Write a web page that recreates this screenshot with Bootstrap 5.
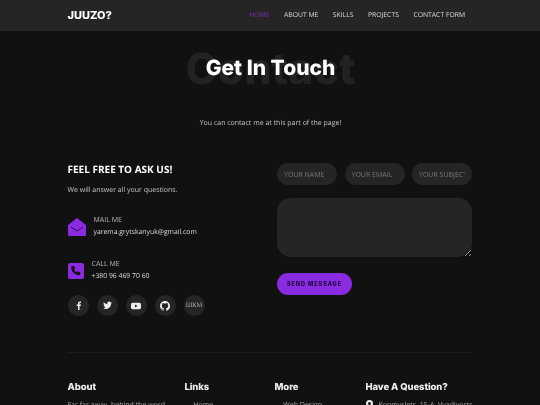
<!DOCTYPE html>
<html lang="en">
<head>
<meta charset="utf-8">
<title>Contact</title>
<link href="https://cdn.jsdelivr.net/npm/bootstrap@5.3.0/dist/css/bootstrap.min.css" rel="stylesheet">
<style>
html,body{background:#111;height:405px;overflow:hidden}
body{font-family:"Open Sans",sans-serif;font-size:7px;color:#c4c4c4;width:540px;text-rendering:geometricPrecision}
.topbar,.wrap-page{filter:blur(.3px)}
.wrap-main{width:405px;margin-left:67px}
.topbar{background:#252525;height:31px}
.topbar-in{padding-right:7px}
.brand-name{font-family:Inter,sans-serif;font-weight:800;font-size:11px;color:#fff;margin-left:.5px}
.menu-list{gap:14.500px;font-size:6.8px;color:#dcdcdc;list-style:none;margin:0;padding:0}
.menu-list a{color:inherit;text-decoration:none}
.menu-list a.on{color:#7a2eb8}
.hero-block{height:60px;margin-top:9px;width:407px}
.ghost-title{position:absolute;left:0;right:0;top:6px;text-align:center;font-family:Inter,sans-serif;font-weight:800;font-size:43px;line-height:46px;color:#222;margin:0}
.hero-title{position:relative;font-family:Inter,sans-serif;font-weight:800;font-size:21px;line-height:28px;color:#fff;margin:0;padding-top:15px;text-align:center}
.hero-sub{line-height:12px;text-align:center;margin:18px 0 0;width:407px}
.contact-row{margin-top:32px;height:190px}
.left-side{width:210px;padding-left:.5px}
.right-side{width:195px;padding-top:1px}
.ask-title{font-weight:700;font-size:10px;line-height:15px;color:#fff;margin:0}
.ask-sub{line-height:12px;margin:8px 0 0}
.info-line{line-height:12px}
.info-line .lab{color:#b8b8b8}
.info-line .val{color:#dcdcdc;font-size:6.85px}
.mail-line{margin-top:18px;gap:8px}
.call-line{margin-top:20px;gap:8px}
.social-row{gap:8px;margin-top:12px}
.social-dot{width:21px;height:21px;border-radius:50%;background:#252525;color:#eee;flex:none}
.social-text{font-family:"Liberation Serif",serif;font-size:6.5px;color:#aaa}
.pill-field{width:60px;height:22px;border:0;border-radius:11px;background:#252525;padding:0 7px;font:7px "Open Sans",sans-serif;color:#777}
.pill-field::placeholder{color:#777;opacity:1}
.area-field{display:block;width:195px;height:59px;border:0;border-radius:14px;background:#252525;margin-top:13px}
.send-pill{width:75px;height:22px;border:0;border-radius:11px;background:#8a2be2;color:#1d0638;font:800 5.600px Inter,sans-serif;letter-spacing:.9px;margin-top:16px;padding:0}
.foot-rule{border-top:1px solid #1c1c1c}
.foot-grid{display:grid;grid-template-columns:117px 90px 91px 1fr;margin-top:28px;padding-left:.5px}
.foot-head{font-family:Inter,sans-serif;font-weight:800;font-size:9.5px;letter-spacing:-.1px;line-height:14px;color:#eee;margin:0 0 5px}
.foot-item{line-height:12px;color:#a8a8a8;white-space:nowrap}
.pin-gap{gap:6px}
</style>
</head>
<body>
<nav class="topbar">
  <div class="wrap-main topbar-in h-100 d-flex align-items-center justify-content-between">
    <span class="brand-name">JUUZO?</span>
    <ul class="menu-list d-flex">
      <li><a class="on" href="#">HOME</a></li>
      <li><a href="#">ABOUT ME</a></li>
      <li><a href="#">SKILLS</a></li>
      <li><a href="#">PROJECTS</a></li>
      <li><a href="#">CONTACT FORM</a></li>
    </ul>
  </div>
</nav>
<div class="wrap-page">
<main class="wrap-main">
  <div class="hero-block position-relative">
    <p class="ghost-title">Contact</p>
    <h1 class="hero-title">Get In Touch</h1>
  </div>
  <p class="hero-sub">You can contact me at this part of the page!</p>
  <div class="contact-row d-flex">
    <div class="left-side">
      <h2 class="ask-title">FEEL FREE TO ASK US!</h2>
      <p class="ask-sub">We will answer all your questions.</p>
      <div class="d-flex align-items-center info-line mail-line">
        <svg width="18" height="18" viewBox="0 0 18 18"><path fill="#8a2be2" d="M0 7 9 0l9 7v9.500a1.500 1.500 0 0 1-1.500 1.500H1.500A1.500 1.500 0 0 1 0 16.500Z"/><path fill="none" stroke="#2a0d4a" stroke-width="1" d="M3 9l6 4 6-4"/></svg>
        <div><div class="lab">MAIL ME</div><div class="val">yarema.grytskanyuk@gmail.com</div></div>
      </div>
      <div class="d-flex align-items-center info-line call-line">
        <svg width="16" height="16" viewBox="0 0 16 16"><rect width="16" height="16" rx="2" fill="#8a2be2"/><path fill="#111" d="M4 3.200 6 2.800l1.200 2.700-1.200 1c.6 1.300 1.500 2.200 2.800 2.900l1-1.200 2.700 1.200-.4 2c-.1.500-.5.800-1 .8C6.700 12.200 3.200 8.500 3.200 4.200c0-.5.300-.9.800-1Z"/></svg>
        <div><div class="lab">CALL ME</div><div class="val">+380 96 469 70 60</div></div>
      </div>
      <div class="d-flex social-row">
        <span class="social-dot d-flex align-items-center justify-content-center"><svg width="9" height="9" viewBox="0 0 9 9"><path fill="#eee" d="M5.500 9V5.100h1.300l.2-1.500H5.500V2.700c0-.4.100-.7.700-.7H7V.6C6.800.6 6.400.5 5.900.5 4.800.5 4 1.200 4 2.500v1.100H2.700v1.500H4V9Z"/></svg></span>
        <span class="social-dot d-flex align-items-center justify-content-center"><svg width="9" height="9" viewBox="0 0 9 9"><path fill="#eee" d="M9 1.800c-.3.100-.7.200-1 .3.400-.2.600-.6.800-1-.4.200-.7.400-1.100.4A1.800 1.800 0 0 0 4.500 3.200C3 3.100 1.700 2.400.8 1.300c-.5.800-.2 1.800.5 2.400-.3 0-.6-.1-.8-.2 0 .9.600 1.600 1.400 1.800-.2.100-.5.100-.8 0 .2.700.9 1.200 1.700 1.300C2 7.100 1 7.400 0 7.300 3.500 9.400 8.100 7.200 8.100 2.600c.4-.2.700-.5.900-.8Z"/></svg></span>
        <span class="social-dot d-flex align-items-center justify-content-center"><svg width="10" height="8" viewBox="0 0 10 8"><rect y=".8" width="10" height="6.400" rx="1.600" fill="#eee"/><path fill="#252525" d="M4 2.500 6.600 4 4 5.500Z"/></svg></span>
        <span class="social-dot d-flex align-items-center justify-content-center"><svg width="10" height="10" viewBox="0 0 16 16"><path fill="#eee" d="M8 0C3.580 0 0 3.580 0 8c0 3.540 2.290 6.530 5.470 7.590.4.070.55-.17.550-.38 0-.19-.01-.82-.01-1.490-2.010.37-2.530-.49-2.690-.94-.09-.23-.48-.94-.82-1.130-.28-.15-.68-.52-.01-.53.630-.01 1.080.58 1.230.82.720 1.210 1.870.87 2.330.66.070-.52.280-.87.510-1.070-1.780-.2-3.640-.89-3.640-3.950 0-.87.310-1.590.82-2.150-.08-.2-.36-1.020.08-2.120 0 0 .67-.21 2.200.82.640-.18 1.320-.27 2-.27s1.360.09 2 .27c1.530-1.040 2.200-.82 2.200-.82.440 1.100.16 1.920.08 2.120.51.560.82 1.270.82 2.150 0 3.070-1.870 3.750-3.650 3.950.29.250.54.730.54 1.480 0 1.070-.01 1.930-.01 2.200 0 .21.150.46.550.38A8.010 8.010 0 0 0 16 8c0-4.420-3.580-8-8-8Z"/></svg></span>
        <span class="social-dot social-text d-flex align-items-center justify-content-center">ШКМ</span>
      </div>
    </div>
    <form class="right-side">
      <div class="d-flex justify-content-between">
        <input class="pill-field" placeholder="YOUR NAME">
        <input class="pill-field" placeholder="YOUR EMAIL">
        <input class="pill-field" placeholder="YOUR SUBJECT">
      </div>
      <textarea class="area-field" aria-label="Message"></textarea>
      <button class="send-pill" type="button">SEND MESSAGE</button>
    </form>
  </div>
  <div class="foot-rule"></div>
  <div class="foot-grid">
    <div><h3 class="foot-head">About</h3><div class="foot-item">Far far away, behind the word</div></div>
    <div><h3 class="foot-head">Links</h3><div class="foot-item">→ Home</div></div>
    <div><h3 class="foot-head">More</h3><div class="foot-item">→ Web Design</div></div>
    <div><h3 class="foot-head">Have A Question?</h3><div class="foot-item d-flex pin-gap"><svg width="7" height="9" viewBox="0 0 7 9"><path fill="#eee" fill-rule="evenodd" d="M3.500 0A3.500 3.500 0 0 1 7 3.500C7 6 3.500 9 3.500 9S0 6 0 3.500A3.500 3.500 0 0 1 3.500 0Zm0 2a1.500 1.500 0 1 0 0 3 1.500 1.500 0 0 0 0-3Z"/></svg><span>Kopmyslets, 15-A, Vyadivosts</span></div></div>
  </div>
</main>
</div>
<script src="https://cdn.jsdelivr.net/npm/bootstrap@5.3.0/dist/js/bootstrap.bundle.min.js"></script>
</body>
</html>
